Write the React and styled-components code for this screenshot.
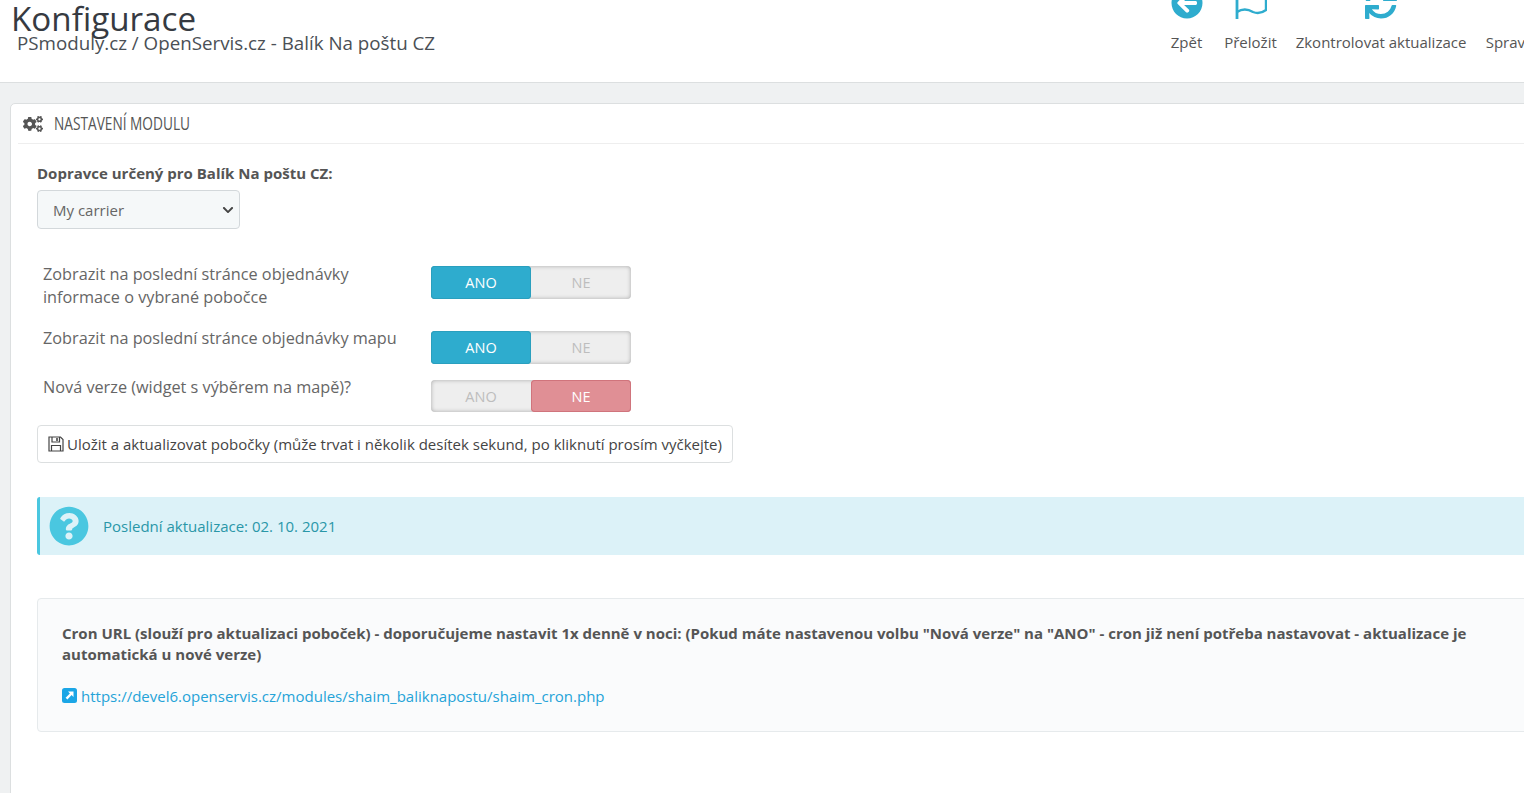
import React from 'react'
import styled, { createGlobalStyle } from 'styled-components'
import { FaArrowCircleLeft, FaSync, FaCogs, FaQuestionCircle, FaChevronDown } from 'react-icons/fa'

const GlobalStyle = createGlobalStyle`
  html, body {
    margin: 0;
    height: 100%;
    overflow: hidden;
    background: #eff1f2;
  }
  body {
    font-family: "Open Sans", "Liberation Sans", sans-serif;
    color: #555;
  }
`

const Page = styled.div`
  width: 1524px;
  height: 793px;
  overflow: hidden;
  background: #eff1f2;
`

const Header = styled.header`
  height: 82px;
  box-sizing: content-box;
  background: #fff;
  border-bottom: 1px solid #dcdfe0;
  display: flex;
  justify-content: space-between;
  overflow: hidden;
`

const TitleBlock = styled.div`
  padding-left: 11px;
`

const Title = styled.h1`
  margin: 0;
  height: 37px;
  font-size: 33.2px;
  line-height: 37px;
  font-weight: 400;
  color: #363a41;
`

const Breadcrumb = styled.div`
  margin-left: 6px;
  margin-top: -6px;
  font-size: 18.75px;
  line-height: 24px;
  color: #4a4f55;
  position: relative;
`

const Toolbar = styled.nav`
  display: flex;
  flex: none;
  width: 353px;
  margin-top: -13px;
  align-items: flex-start;
`

const ToolItem = styled.a`
  display: flex;
  flex: none;
  flex-direction: column;
  align-items: center;
  width: ${p => p.$width}px;
  margin-right: ${p => p.$gap}px;
  font-size: 15px;
  line-height: 20px;
  color: #555;
  white-space: nowrap;
  svg {
    display: block;
    height: 32px;
    width: 32px;
    margin-bottom: 13px;
    color: #2eacce;
  }
`

const Content = styled.main`
  padding: 20px 0 0 10px;
`

const Panel = styled.section`
  width: 1560px;
  height: 720px;
  box-sizing: border-box;
  padding: 0 7px;
  background: #fff;
  border: 1px solid #dcdfe0;
  border-radius: 5px;
`

const PanelHead = styled.h2`
  display: flex;
  align-items: center;
  gap: 11px;
  height: 39px;
  margin: 0;
  padding-left: 5px;
  border-bottom: 1px solid #eeeeee;
  font-size: 18px;
  font-weight: 400;
  color: #555;
  svg {
    width: 20px;
    height: 20px;
    color: #555;
  }
`

const CondensedText = styled.span`
  display: inline-block;
  margin-top: -2px;
  transform: scaleX(0.76);
  transform-origin: left center;
  white-space: nowrap;
`

const PanelBody = styled.div`
  padding: 19px 0 0 19px;
`

const FieldLabel = styled.label`
  display: block;
  font-size: 15px;
  line-height: 20px;
  font-weight: 700;
  color: #555;
  margin-bottom: 8px;
`

const SelectWrap = styled.div`
  position: relative;
  width: 203px;
  margin-top: -1px;
  svg {
    position: absolute;
    top: 14px;
    right: 6px;
    width: 12px;
    height: 12px;
    color: #444;
    pointer-events: none;
  }
`

const CarrierSelect = styled.select`
  display: block;
  width: 100%;
  height: 39px;
  padding: 0 15px;
  appearance: none;
  background-color: #f5f8f9;
  border: 1px solid #d3d8db;
  border-radius: 4px;
  font-family: inherit;
  font-size: 15px;
  color: #666;
`

const Switches = styled.div`
  margin-top: 37px;
  padding-left: 6px;
  display: flex;
  flex-direction: column;
`

const SwitchRow = styled.div`
  display: grid;
  grid-template-columns: 388px 200px;
  margin-bottom: ${p => p.$after}px;
  font-size: 16.25px;
  line-height: 23px;
  color: #666;
`

const RowLabel = styled.div`
  margin-top: ${p => p.$top}px;
`

const Toggle = styled.div`
  display: flex;
  height: ${p => p.$height}px;
  background: #eeeeee;
  border-radius: 4px;
  box-shadow: inset 0 0 4px rgba(0, 0, 0, 0.3);
`

const ToggleSide = styled.span`
  flex: 1;
  display: flex;
  align-items: center;
  justify-content: center;
  font-size: 14.5px;
  border-radius: 4px;
  color: ${p => (p.$on ? '#fff' : '#bdbdbd')};
  background: ${p => (p.$on ? (p.$no ? '#e08f95' : '#2eacce') : 'transparent')};
  box-shadow: ${p => (p.$on ? `inset 0 0 0 1px ${p.$no ? '#d0747c' : '#2a9fbe'}` : 'none')};
`

const SaveButton = styled.button`
  display: inline-flex;
  align-items: center;
  gap: 3px;
  height: 38px;
  margin-top: 13px;
  padding: 0 10px;
  background: #fff;
  border: 1px solid #dcdfe0;
  border-radius: 4px;
  font-family: inherit;
  font-size: 15px;
  color: #444;
  white-space: nowrap;
  svg {
    width: 16px;
    height: 16px;
    color: #444;
  }
`

const Alert = styled.div`
  display: flex;
  align-items: center;
  gap: 14px;
  height: 58px;
  margin-top: 34px;
  padding-left: 9px;
  box-sizing: border-box;
  background: #dcf2f8;
  border-left: 3px solid #4ac7e0;
  border-radius: 3px;
  font-size: 15px;
  color: #2a97a8;
  svg {
    width: 40px;
    height: 40px;
    color: #4ac7e0;
  }
`

const Well = styled.div`
  height: 134px;
  box-sizing: border-box;
  margin-top: 43px;
  padding: 24px 24px 0;
  background: #fafbfc;
  border: 1px solid #e6eaec;
  border-radius: 4px;
  font-size: 15px;
  line-height: 21px;
`

const WellTitle = styled.div`
  font-weight: 700;
  color: #555;
`

const CronLink = styled.a`
  display: flex;
  align-items: center;
  gap: 4px;
  margin-top: 21px;
  color: #25a3d8;
  svg {
    width: 15px;
    height: 15px;
    margin-top: -2px;
  }
`

const FlagIcon = () => (
  <svg viewBox="0 0 32 32" fill="none" stroke="currentColor" strokeWidth="2.4">
    <path d="M2 0V32" strokeWidth="2.8" />
    <path d="M2 25C8 21 13 22 18 25C23 27 27 26 31 23V0" />
  </svg>
)

const DiskIcon = () => (
  <svg viewBox="0 0 16 16" fill="none" stroke="currentColor" strokeWidth="1.2">
    <path d="M1 1H12.5L15 3.5V15H1Z" />
    <path d="M4 1V6H11.5V1" />
    <path d="M3.5 15V9.5H12.5V15" />
    <path d="M9 2V5" strokeWidth="1.6" />
  </svg>
)

const LinkIcon = () => (
  <svg viewBox="0 0 15 15">
    <rect width="15" height="15" rx="2.5" fill="#1ba6e6" />
    <path d="M6 3.5H11.5V9L9.6 7.1L5.4 11.6L3.6 9.8L7.9 5.4Z" fill="#fff" />
  </svg>
)

const rows = [
  { text: <>Zobrazit na poslední stránce objednávky<br />informace o vybrané pobočce</>, on: true, height: 33, after: 22, top: -3 },
  { text: 'Zobrazit na poslední stránce objednávky mapu', on: true, height: 33, after: 16, top: -4 },
  { text: 'Nová verze (widget s výběrem na mapě)?', on: false, height: 32, after: 0, top: -4 },
]

const App = () => (
  <Page>
    <GlobalStyle />
    <Header>
      <TitleBlock>
        <Title>Konfigurace</Title>
        <Breadcrumb>PSmoduly.cz / OpenServis.cz - Balík Na poštu CZ</Breadcrumb>
      </TitleBlock>
      <Toolbar>
        <ToolItem $width={31} $gap={22}><FaArrowCircleLeft />Zpět</ToolItem>
        <ToolItem $width={53} $gap={19}><FlagIcon />Přeložit</ToolItem>
        <ToolItem $width={170} $gap={19}><FaSync />Zkontrolovat aktualizace</ToolItem>
        <ToolItem $width={115} $gap={0}><FaSync />Spravovat háčky</ToolItem>
      </Toolbar>
    </Header>
    <Content>
      <Panel>
        <PanelHead><FaCogs /><CondensedText>NASTAVENÍ MODULU</CondensedText></PanelHead>
        <PanelBody>
          <FieldLabel>Dopravce určený pro Balík Na poštu CZ:</FieldLabel>
          <SelectWrap>
            <CarrierSelect defaultValue="my">
              <option value="my">My carrier</option>
            </CarrierSelect>
            <FaChevronDown />
          </SelectWrap>
          <Switches>
            {rows.map((row, i) => (
              <SwitchRow key={i} $after={row.after}>
                <RowLabel $top={row.top}>{row.text}</RowLabel>
                <Toggle $height={row.height}>
                  <ToggleSide $on={row.on}>ANO</ToggleSide>
                  <ToggleSide $on={!row.on} $no>NE</ToggleSide>
                </Toggle>
              </SwitchRow>
            ))}
          </Switches>
          <SaveButton>
            <DiskIcon />
            Uložit a aktualizovat pobočky (může trvat i několik desítek sekund, po kliknutí prosím vyčkejte)
          </SaveButton>
          <Alert>
            <FaQuestionCircle />
            Poslední aktualizace: 02. 10. 2021
          </Alert>
          <Well>
            <WellTitle>
              Cron URL (slouží pro aktualizaci poboček) - doporučujeme nastavit 1x denně v noci: (Pokud máte nastavenou volbu "Nová verze" na "ANO" - cron již není potřeba nastavovat - aktualizace je automatická u nové verze)
            </WellTitle>
            <CronLink>
              <LinkIcon />
              https://devel6.openservis.cz/modules/shaim_baliknapostu/shaim_cron.php
            </CronLink>
          </Well>
        </PanelBody>
      </Panel>
    </Content>
  </Page>
)

export default App
